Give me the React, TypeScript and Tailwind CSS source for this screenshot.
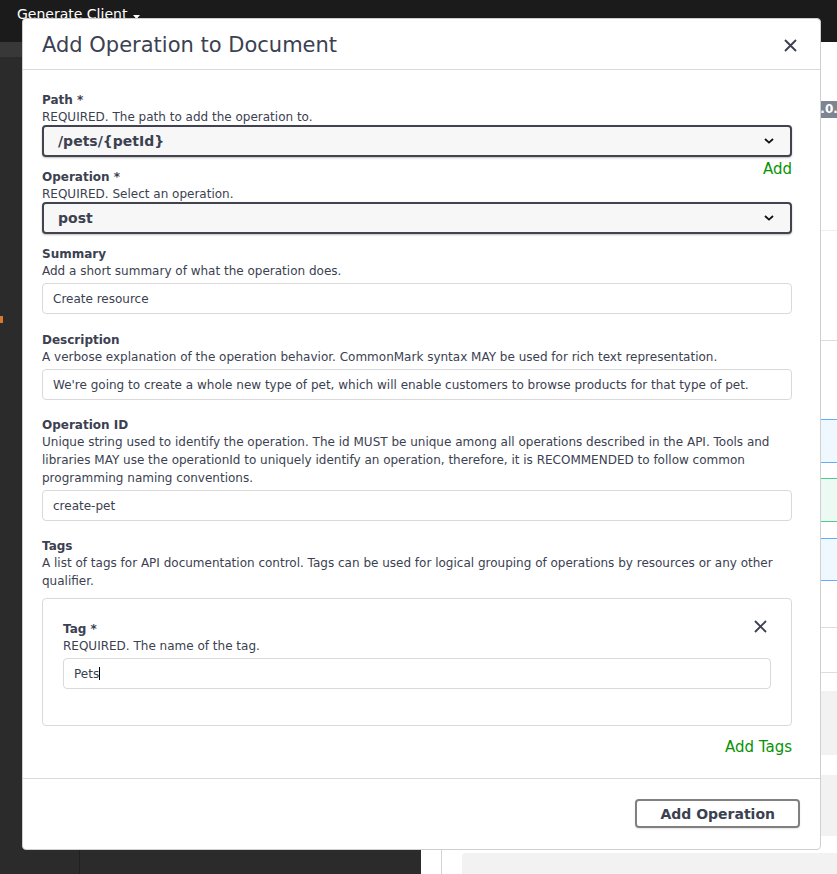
import React from "react";

const XIcon = ({ size = 13 }: { size?: number }) => (
  <svg width={size} height={size} viewBox="0 0 13 13" className="shrink-0">
    <path d="M1 1L12 12M12 1L1 12" stroke="#3b4151" strokeWidth="1.9" fill="none" />
  </svg>
);

const Chevron = () => (
  <svg width="10" height="6" viewBox="0 0 10 6" className="shrink-0">
    <path d="M1 1l4 3.6L9 1" stroke="#111" strokeWidth="1.8" fill="none" />
  </svg>
);

const Label = ({ children }: { children: React.ReactNode }) => (
  <div className="pt-[2px] -mb-[2px] text-[12px] leading-[17px] font-bold text-[#3b4151]">{children}</div>
);

const Desc = ({ children }: { children: React.ReactNode }) => (
  <div className="pt-[1px] -mb-[1px] text-[12px] leading-[18px] text-[#3b4151]">{children}</div>
);

const Select = ({ value }: { value: string }) => (
  <div className="h-[32px] flex items-center justify-between rounded-[4px] border-2 border-[#41444e] bg-[#f7f7f7] pl-[14px] pr-[16px] shadow-[0_1px_2px_0_rgba(0,0,0,0.25)]">
    <span className="text-[14px] font-bold text-[#3b4151]">{value}</span>
    <Chevron />
  </div>
);

const TextInput = ({ value, caret = false }: { value: string; caret?: boolean }) => (
  <div className="mt-[4px] h-[31px] flex items-center rounded-[4px] border border-[#d9d9d9] bg-white px-[10px]">
    <span className="text-[12px] text-[#3b4151] whitespace-nowrap">{value}</span>
    {caret && <span className="w-px h-[13px] bg-black" />}
  </div>
);

export default function App() {
  return (
    <div className="relative w-[837px] h-[874px] overflow-hidden bg-white font-['DejaVu_Sans',sans-serif]">
      {/* top bar */}
      <div className="h-[42px] bg-[#1b1b1b] pl-[17px] pt-[6px] flex items-start gap-[6px]">
        <span className="text-white text-[14px] leading-[17px]">Generate Client</span>
        <svg width="7" height="4" viewBox="0 0 7 4" className="mt-[9px]">
          <path d="M0 0h7L3.5 4z" fill="#fff" />
        </svg>
      </div>

      {/* background workspace */}
      <div className="flex h-[832px]">
        <div className="w-[421px] shrink-0 bg-[#2b2b2b] flex">
          <div className="w-[80px] shrink-0 border-r border-[#202020] flex flex-col">
            <div className="h-[15px] bg-[#383838]" />
            <div className="mt-[259px] w-[3px] h-[7px] bg-[#d9792b]" />
          </div>
          <div className="flex-1 flex flex-col">
            <div className="h-[15px] bg-[#383838]" />
          </div>
        </div>
        <div className="shrink-0 flex pl-[20px]">
          <div className="w-[560px] shrink-0 border-l border-[#d4d4d4] pl-[20px] flex flex-col">
            <div className="mt-[59px] ml-[346px] h-[17px] w-[60px] bg-[#7d8492] rounded-[3px] px-[4px] text-white text-[12px] font-bold leading-[17px]">
              1.0.0
            </div>
            <div className="mt-[112px] h-px bg-[#eeeeee]" />
            <div className="mt-[109px] h-px bg-[#dddddd]" />
            <div className="mt-[78px] h-[44px] border border-[#61affe] bg-[#eff7ff] rounded-[4px]" />
            <div className="mt-[15px] h-[44px] border border-[#49cc90] bg-[#edfaf4] rounded-[4px]" />
            <div className="mt-[16px] h-[43px] border border-[#61affe] bg-[#eff7ff] rounded-[4px]" />
            <div className="mt-[46px] h-px bg-[#dddddd]" />
            <div className="mt-[44px] h-px bg-[#dddddd]" />
            <div className="mt-[18px] h-[64px] bg-[#f2f2f2]" />
            <div className="mt-[20px] h-[61px] bg-[#f2f2f2]" />
            <div className="mt-[17px] flex-1 bg-[#f2f2f2] rounded-tl-[4px]" />
          </div>
        </div>
      </div>

      {/* modal */}
      <div className="absolute left-[22px] top-[18px] w-[799px] h-[832px] bg-white border border-[#cfcfcf] rounded-[4px] flex flex-col text-[#3b4151]">
        <div className="h-[51px] shrink-0 flex items-center justify-between pl-[19px] pr-[23px] border-b border-[#d9d9d9]">
          <h3 className="text-[21px] leading-[25px] pt-[2px] text-[#3b4151]">Add Operation to Document</h3>
          <div className="mt-[3px]">
            <XIcon />
          </div>
        </div>

        <div className="flex-1 pl-[19px] pr-[28px] pt-[20px]">
          {/* Path */}
          <Label>Path *</Label>
          <Desc>REQUIRED. The path to add the operation to.</Desc>
          <Select value="/pets/{petId}" />
          <div className="h-[10px] flex justify-end items-start">
            <span className="mt-[3px] text-[15px] leading-[19px] text-[#079307]">Add</span>
          </div>

          {/* Operation */}
          <Label>Operation *</Label>
          <Desc>REQUIRED. Select an operation.</Desc>
          <Select value="post" />

          {/* Summary */}
          <div className="mt-[10px]">
            <Label>Summary</Label>
            <Desc>Add a short summary of what the operation does.</Desc>
            <TextInput value="Create resource" />
          </div>

          {/* Description */}
          <div className="mt-[16px]">
            <Label>Description</Label>
            <Desc>
              A verbose explanation of the operation behavior. CommonMark syntax MAY be used for rich text representation.
            </Desc>
            <TextInput value="We're going to create a whole new type of pet, which will enable customers to browse products for that type of pet." />
          </div>

          {/* Operation ID */}
          <div className="mt-[15px]">
            <Label>Operation ID</Label>
            <Desc>
              Unique string used to identify the operation. The id MUST be unique among all operations described in the API. Tools and libraries MAY use the operationId to uniquely identify an operation, therefore, it is RECOMMENDED to follow common programming naming conventions.
            </Desc>
            <TextInput value="create-pet" />
          </div>

          {/* Tags */}
          <div className="mt-[15px]">
            <Label>Tags</Label>
            <Desc>
              A list of tags for API documentation control. Tags can be used for logical grouping of operations by resources or any other qualifier.
            </Desc>
            <div className="mt-[9px] h-[128px] border border-[#d9d9d9] rounded-[4px] px-[20px] pt-[20px]">
              <div className="flex justify-between items-start">
                <div>
                  <Label>Tag *</Label>
                  <Desc>REQUIRED. The name of the tag.</Desc>
                </div>
                <div className="mt-[1px] mr-[4px]">
                  <XIcon />
                </div>
              </div>
              <div className="mt-[1px]">
                <TextInput value="Pets" caret />
              </div>
            </div>
            <div className="mt-[12px] flex justify-end">
              <span className="text-[15px] leading-[19px] text-[#079307]">Add Tags</span>
            </div>
          </div>
        </div>

        <div className="h-[71px] shrink-0 border-t border-[#d9d9d9] flex justify-end items-start pt-[20px] pr-[20px]">
          <button className="h-[29px] px-[23px] border-2 border-[#808080] rounded-[4px] bg-transparent text-[14px] font-bold text-[#3b4151] shadow-[0_1px_2px_rgba(0,0,0,0.1)] leading-none">
            Add Operation
          </button>
        </div>
      </div>
    </div>
  );
}
